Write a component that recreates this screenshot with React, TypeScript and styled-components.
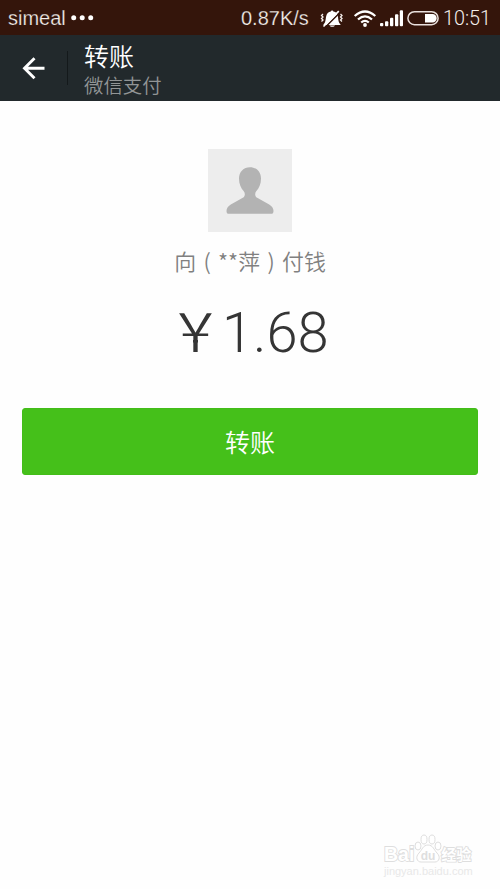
import React from 'react';
import styled, { createGlobalStyle } from 'styled-components';

const GlobalStyle = createGlobalStyle`
  * { box-sizing: border-box; }
  body { margin: 0; background: #fff; }
`;

const Screen = styled.div`
  display: flex;
  flex-direction: column;
  width: 500px;
  height: 889px;
  overflow: hidden;
  background: #fefefe;
  font-family: 'Liberation Sans', 'Noto Sans CJK SC', sans-serif;
`;

const StatusBar = styled.div`
  display: flex;
  align-items: center;
  justify-content: space-between;
  height: 35px;
  flex: none;
  padding: 2px 8px 0 8px;
  background: #34150b;
  color: #f5efec;
  font-size: 20px;
  line-height: 33px;
  white-space: nowrap;
`;

const StatusGroup = styled.div`
  display: flex;
  align-items: center;
`;

const StatusText = styled.span<{ $width: number }>`
  width: ${(p) => p.$width}px;
  flex: none;
  -webkit-text-stroke: 0.25px #34150b;
`;

const Clock = styled.span`
  width: 49px;
  margin-left: 4px;
  font: 300 19.8px/34px Roboto, 'Liberation Sans', sans-serif;
`;

const StatusIcon = styled.svg<{ $left: number }>`
  display: block;
  flex: none;
  margin-left: ${(p) => p.$left}px;
`;

const Header = styled.header`
  display: flex;
  align-items: center;
  height: 66px;
  flex: none;
  background: #22292c;
`;

const BackButton = styled.button`
  display: flex;
  align-items: center;
  justify-content: center;
  width: 67px;
  height: 66px;
  padding: 0;
  border: 0;
  background: none;
`;

const Divider = styled.div`
  width: 1px;
  height: 34px;
  background: #14191b;
`;

const HeaderText = styled.div`
  display: flex;
  flex-direction: column;
  margin-left: 16px;
`;

const Title = styled.div`
  height: 31px;
  font: 350 25px/33px 'Noto Sans CJK SC', sans-serif;
  color: #fff;
`;

const Subtitle = styled.div`
  height: 28px;
  font: 350 19.4px/30px 'Noto Sans CJK SC', sans-serif;
  color: #929596;
`;

const Content = styled.main`
  display: flex;
  flex-direction: column;
  align-items: center;
  flex: 1;
  padding: 48px 22px 0;
`;

const Avatar = styled.div`
  width: 84px;
  height: 83px;
  background: #ededed;
`;

const Payee = styled.div`
  display: flex;
  margin-top: 13px;
  height: 33px;
  font: 350 21.9px/32px 'Noto Sans CJK SC', sans-serif;
  color: #808080;
`;

const Mark = styled.span<{ $width: number }>`
  width: ${(p) => p.$width}px;
  text-align: center;
`;

const Amount = styled.div`
  display: flex;
  align-items: center;
  margin: 22px 0 0;
  width: 162px;
  height: 66px;
  font-size: 56px;
  line-height: 66px;
  color: #353535;
`;

const Currency = styled.span`
  height: 74px;
  font-family: 'Noto Sans CJK SC', sans-serif;
  font-size: 53px;
  font-weight: 350;
  clip-path: polygon(
    0 0, 100% 0, 100% 43px, calc(50% + 2.5px) 43px, calc(50% + 2.5px) 100%,
    calc(50% - 2.5px) 100%, calc(50% - 2.5px) 43px, 0 43px
  );
`;

const Digits = styled.span`
  font-family: Roboto, 'Liberation Sans', sans-serif;
  font-weight: 300;
`;

const TransferButton = styled.button`
  width: 456px;
  height: 67px;
  margin-top: 42px;
  padding: 0 0 1px;
  border: 1px solid #43bd19;
  border-radius: 3px;
  background: #45c01a;
  color: #fff;
  font: 350 25px/64px 'Noto Sans CJK SC', sans-serif;
`;

const Watermark = styled.div`
  display: flex;
  flex-direction: column;
  align-self: flex-end;
  width: 92px;
  margin: auto 2px 11px 0;
  color: #fff;
  white-space: nowrap;
`;

const WatermarkBrand = styled.div`
  display: flex;
  align-items: flex-end;
  height: 30px;
  font: 700 19.5px/20px 'Liberation Sans', sans-serif;
`;

const Outlined = styled.span`
  paint-order: stroke fill;
  -webkit-text-stroke: 1.8px #dedede;
`;

const WatermarkChinese = styled(Outlined)`
  margin-left: -1px;
  font: 700 15px/20px 'Noto Sans CJK SC', sans-serif;
`;

const WatermarkUrl = styled.div`
  height: 14px;
  font: 400 11px/14px 'Liberation Sans', sans-serif;
  color: #e8e8e8;
`;

function MuteIcon() {
  return (
    <StatusIcon $left={0} width="24" height="20" viewBox="0 0 24 20">
      <path d="M3.500 15.500c2-1.500 2-4.500 2.500-7.500C6.500 4.500 8.500 2.600 10.800 2.500c.3-1.500 2.300-1.500 2.600 0 2.800.4 4.300 2.500 4.600 5.500.3 2.700.5 6 2.500 7.500v.5h-17zM9.500 16.500h5.500c-.6 1.800-4.900 1.800-5.500 0z" fill="#fff" />
      <path d="M4.700 18.800L20.500 3" stroke="#34150b" strokeWidth="1.500" />
      <path d="M3.500 17.500L18.800 2.200" stroke="#fff" strokeWidth="1.700" />
      <path d="M3 5L1.500 6.500 3 8 1.500 9.500 3 11l-1.500 1.500M20.500 5L22 6.500 20.500 8 22 9.500 20.500 11l1.500 1.500" stroke="#f5efec" strokeWidth="1.300" fill="none" />
    </StatusIcon>
  );
}

function WifiIcon() {
  return (
    <StatusIcon $left={9} width="24" height="20" viewBox="0 0 24 20">
      <g fill="none" stroke="#fff" strokeWidth="2.300">
        <path d="M1.700 7Q12-2 22.300 7" />
        <path d="M5 10.500Q12 4.200 19 10.500" />
        <path d="M8.200 13.500Q12 10.200 15.800 13.500" />
      </g>
      <circle cx="12" cy="16" r="1.900" fill="#fff" />
    </StatusIcon>
  );
}

function SignalIcon() {
  return (
    <StatusIcon $left={3} width="24" height="20" viewBox="0 0 24 20">
      <g fill="#fff">
        <rect x="0" y="14" width="3.300" height="3.300" rx="1" />
        <rect x="5" y="12.300" width="3.300" height="5" rx="1" />
        <rect x="10" y="8.800" width="3.300" height="8.500" rx="1" />
        <rect x="15" y="5.300" width="3.300" height="12" rx="1" />
        <rect x="19.800" y="1.300" width="3.200" height="16" rx="1" />
      </g>
    </StatusIcon>
  );
}

function BatteryIcon() {
  return (
    <StatusIcon $left={3} width="32" height="18" viewBox="0 0 32 18">
      <rect x=".9" y="1.700" width="30.200" height="13" rx="6.500" fill="none" stroke="#e9e0dd" strokeWidth="1.500" />
      <path d="M18 4h7.500a4.200 4.200 0 0 1 0 8.400H18z" fill="#fff" />
    </StatusIcon>
  );
}

export default function App() {
  return (
    <>
      <GlobalStyle />
      <Screen>
        <StatusBar>
          <StatusGroup>
            <StatusText $width={63}>simeal</StatusText>
            <StatusIcon $left={0} width="24" height="7" viewBox="0 0 24 7">
              <g fill="#fff">
                <circle cx="2.700" cy="2.700" r="2.500" />
                <circle cx="11.200" cy="2.700" r="2.500" />
                <circle cx="19.700" cy="2.700" r="2.500" />
              </g>
            </StatusIcon>
          </StatusGroup>
          <StatusGroup>
            <StatusText $width={79}>0.87K/s</StatusText>
            <MuteIcon />
            <WifiIcon />
            <SignalIcon />
            <BatteryIcon />
            <Clock>10:51</Clock>
          </StatusGroup>
        </StatusBar>
        <Header>
          <BackButton aria-label="返回">
            <svg width="24" height="24" viewBox="0 0 24 24" fill="none" stroke="#fff" strokeWidth="2.900">
              <path d="M22.500 12.300H3M12.500 2.300l-10 10 10 10" />
            </svg>
          </BackButton>
          <Divider />
          <HeaderText>
            <Title>转账</Title>
            <Subtitle>微信支付</Subtitle>
          </HeaderText>
        </Header>
        <Content>
          <Avatar>
            <svg width="84" height="83" viewBox="0 0 84 83">
              <path d="M42 18.200c6.500 0 11 4.600 11 11.300 0 5.500-2 9.700-4.600 12.500-1.800 2-1.700 5.300.8 6.800l12 6.700c3 1.800 4.300 4 4.300 6.500 0 2-.8 2.800-2.500 2.800H21c-1.700 0-2.500-.8-2.500-2.800 0-2.500 1.300-4.700 4.300-6.500l12-6.700c2.500-1.500 2.600-4.800.8-6.800-2.600-2.800-4.600-7-4.600-12.500 0-6.700 4.500-11.300 11-11.300z" fill="#b3b3b3" />
            </svg>
          </Avatar>
          <Payee>
            <span>向</span>
            <Mark $width={22}>(</Mark>
            <span>**萍</span>
            <Mark $width={22}>)</Mark>
            <span>付钱</span>
          </Payee>
          <Amount>
            <Currency>￥</Currency>
            <Digits>1.68</Digits>
          </Amount>
          <TransferButton>转账</TransferButton>
          <Watermark>
            <WatermarkBrand>
              <Outlined>Bai</Outlined>
              <svg width="28" height="30" viewBox="0 0 28 30" fill="#fff" stroke="#dedede">
                <ellipse cx="4" cy="12" rx="3" ry="4" />
                <ellipse cx="10" cy="5.500" rx="3" ry="4.500" />
                <ellipse cx="18" cy="5.500" rx="3" ry="4.500" />
                <ellipse cx="24" cy="12" rx="3" ry="4" />
                <path d="M14 11c5 0 6 5 9 8 4 4 2 9-2 9H7c-4 0-6-5-2-9 3-3 4-8 9-8z" />
                <text x="14" y="25.500" textAnchor="middle" fontSize="12" fontWeight="700" fill="#dedede" stroke="none">du</text>
              </svg>
              <WatermarkChinese>经验</WatermarkChinese>
            </WatermarkBrand>
            <WatermarkUrl>jingyan.baidu.com</WatermarkUrl>
          </Watermark>
        </Content>
      </Screen>
    </>
  );
}
